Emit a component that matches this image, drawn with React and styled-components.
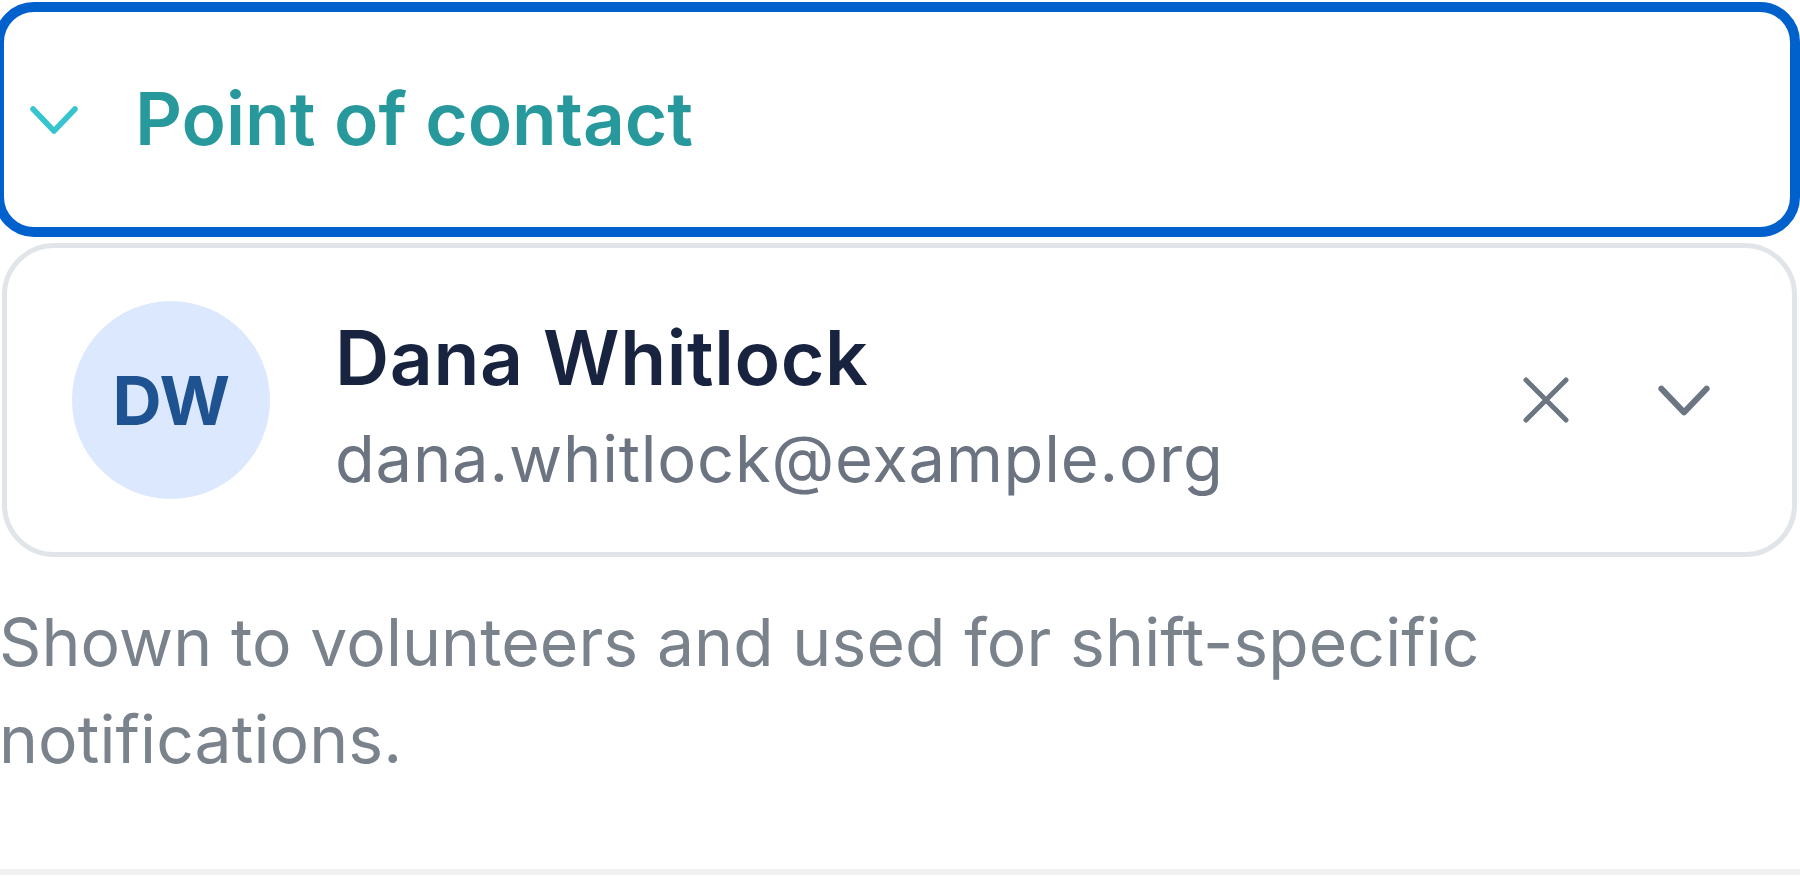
import React from 'react'
import styled, { createGlobalStyle } from 'styled-components'

const GlobalStyle = createGlobalStyle`
	html, body {
		margin: 0;
		padding: 0;
		background: #ffffff;
	}
	body {
		font-family: Inter, "Noto Sans", "Liberation Sans", sans-serif;
		overflow: hidden;
	}
`

const Section = styled.section`
	width: 1800px;
	box-sizing: border-box;
	padding: 2px 3px 81px 2px;
	border-bottom: 6px solid #f0f1f2;
`

const Header = styled.button`
	display: flex;
	align-items: center;
	gap: 56px;
	box-sizing: border-box;
	width: calc(100% + 11px);
	height: 235px;
	margin: 0 -3px 0 -8px;
	padding: 0 0 0 25px;
	background: #ffffff;
	border: 10px solid #0060cc;
	border-radius: 40px;
	font: inherit;
	cursor: pointer;
	text-align: left;
`

const Title = styled.span`
	font-size: 73px;
	font-weight: 580;
	color: #27999c;
	letter-spacing: 0px;
	margin-top: -2px;
`

const Card = styled.div`
	display: flex;
	align-items: center;
	box-sizing: border-box;
	height: 314px;
	margin-top: 6px;
	padding: 0 58px 0 65px;
	border: 5px solid #e1e4e9;
	border-radius: 52px;
`

const Avatar = styled.div`
	flex: none;
	display: flex;
	align-items: center;
	justify-content: center;
	width: 198px;
	height: 198px;
	border-radius: 50%;
	background: #dbe8fd;
	color: #1f5291;
	font-size: 68px;
	font-weight: 650;
	letter-spacing: -0.5px;
`

const Info = styled.div`
	flex: 1;
	display: flex;
	flex-direction: column;
	gap: 17px;
	margin: 10px 0 0 65px;
	min-width: 0;
`

const Name = styled.div`
	font-size: 75px;
	font-weight: 560;
	color: #18233f;
	line-height: 1.2;
	letter-spacing: 0.6px;
`

const Email = styled.div`
	font-size: 65px;
	color: #6b7480;
	line-height: 1.2;
	letter-spacing: 0.8px;
`

const Actions = styled.div`
	display: flex;
	align-items: center;
	gap: 38px;
`

const IconButton = styled.button`
	display: flex;
	align-items: center;
	justify-content: center;
	width: 100px;
	height: 100px;
	padding: 0;
	border: none;
	background: transparent;
	color: #6b7682;
	cursor: pointer;
`

const Help = styled.p`
	margin: 37px 0 0 -3px;
	font-size: 66px;
	line-height: 97px;
	color: #7a828c;
	letter-spacing: 0.1px;
`

function Chevron({ color, width, height, stroke }) {
	return (
		<svg width={width} height={height} viewBox="0 0 50 30" fill="none">
			<path
				d="M4 4 L25 26 L46 4"
				stroke={color}
				strokeWidth={stroke}
				strokeLinecap="round"
				strokeLinejoin="round"
			/>
		</svg>
	)
}

function Cross() {
	return (
		<svg width="46" height="46" viewBox="0 0 46 46" fill="none">
			<path
				d="M3 3 L43 43 M43 3 L3 43"
				stroke="currentColor"
				strokeWidth="5"
				strokeLinecap="round"
			/>
		</svg>
	)
}

export default function App() {
	return (
		<>
			<GlobalStyle />
			<Section>
				<Header type="button">
					<Chevron color="#36c4ce" width={50} height={30} stroke={5.5} />
					<Title>Point of contact</Title>
				</Header>
				<Card>
					<Avatar>DW</Avatar>
					<Info>
						<Name>Dana Whitlock</Name>
						<Email>dana.whitlock@example.org</Email>
					</Info>
					<Actions>
						<IconButton type="button" aria-label="Clear">
							<Cross />
						</IconButton>
						<IconButton type="button" aria-label="Open">
							<Chevron color="currentColor" width={54} height={33} stroke={5.5} />
						</IconButton>
					</Actions>
				</Card>
				<Help>Shown to volunteers and used for shift-specific notifications.</Help>
			</Section>
		</>
	)
}
